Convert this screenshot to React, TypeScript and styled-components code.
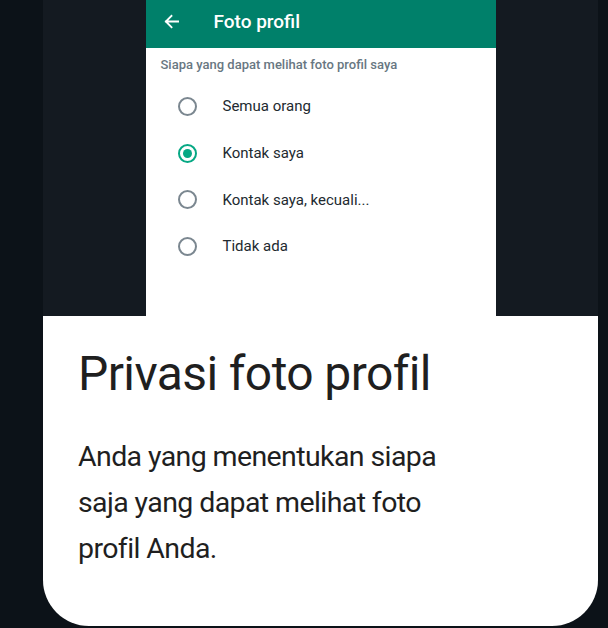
import React from "react";
import styled, { createGlobalStyle } from "styled-components";

const Global = createGlobalStyle`
  html, body { margin: 0; padding: 0; background: #0c1218; }
  body { font-family: Roboto, "Noto Sans", Arial, sans-serif; }
`;

const Page = styled.div`
  width: 608px;
  height: 628px;
  background: #0c1218;
  display: flex;
  padding-left: 43px;
  box-sizing: border-box;
  overflow: hidden;
`;

const Card = styled.div`
  width: 555px;
  height: 626px;
  background: #ffffff;
  border-radius: 0 0 46px 46px;
  overflow: hidden;
  display: flex;
  flex-direction: column;
`;

const Preview = styled.div`
  height: 316px;
  background: #141a21;
  display: flex;
  justify-content: center;
  flex-shrink: 0;
`;

const Screen = styled.div`
  width: 350px;
  background: #ffffff;
  display: flex;
  flex-direction: column;
`;

const AppBar = styled.div`
  height: 48px;
  background: #00806a;
  display: flex;
  align-items: center;
  color: #ffffff;
  padding-left: 18px;
  box-sizing: border-box;
`;

const Back = styled.svg`
  width: 15px;
  height: 15px;
  margin-right: 35px;
  margin-top: -5px;
`;

const AppTitle = styled.div`
  font-size: 19px;
  font-weight: 500;
  margin-top: -5px;
`;

const Caption = styled.div`
  font-size: 13px;
  font-weight: 500;
  color: #687782;
  padding: 9px 0 0 15px;
  height: 22px;
`;

const Options = styled.div`
  display: flex;
  flex-direction: column;
  padding-top: 4px;
`;

const Option = styled.div`
  display: flex;
  align-items: center;
  height: 46.7px;
  padding-left: 32px;
`;

const Radio = styled.span<{ $on?: boolean }>`
  width: 19px;
  height: 19px;
  box-sizing: border-box;
  border-radius: 50%;
  border: 2px solid ${(p) => (p.$on ? "#06a884" : "#7b8790")};
  display: flex;
  align-items: center;
  justify-content: center;
  margin-right: 26px;
  &::after {
    content: "";
    width: 9px;
    height: 9px;
    border-radius: 50%;
    background: #06a884;
    display: ${(p) => (p.$on ? "block" : "none")};
  }
`;

const OptionLabel = styled.span`
  font-size: 15px;
  color: #222a30;
`;

const Body = styled.div`
  padding: 28px 0 0 35px;
  color: #1f1f1f;
`;

const Heading = styled.h1`
  margin: 0;
  font-size: 48px;
  font-weight: 400;
  line-height: 60px;
  letter-spacing: -0.6px;
`;

const Text = styled.p`
  margin: 30px 0 0;
  font-size: 28.5px;
  line-height: 46px;
  letter-spacing: -0.6px;
  width: 400px;
`;

const options = ["Semua orang", "Kontak saya", "Kontak saya, kecuali...", "Tidak ada"];

export default function App() {
  return (
    <>
      <Global />
      <Page>
        <Card>
          <Preview>
            <Screen>
              <AppBar>
                <Back viewBox="0 0 16 16" fill="none" stroke="#fff" strokeWidth="2" strokeLinecap="square">
                  <path d="M15 8H2M8 2L2 8l6 6" />
                </Back>
                <AppTitle>Foto profil</AppTitle>
              </AppBar>
              <Caption>Siapa yang dapat melihat foto profil saya</Caption>
              <Options>
                {options.map((o, i) => (
                  <Option key={o}>
                    <Radio $on={i === 1} />
                    <OptionLabel>{o}</OptionLabel>
                  </Option>
                ))}
              </Options>
            </Screen>
          </Preview>
          <Body>
            <Heading>Privasi foto profil</Heading>
            <Text>Anda yang menentukan siapa saja yang dapat melihat foto profil Anda.</Text>
          </Body>
        </Card>
      </Page>
    </>
  );
}
